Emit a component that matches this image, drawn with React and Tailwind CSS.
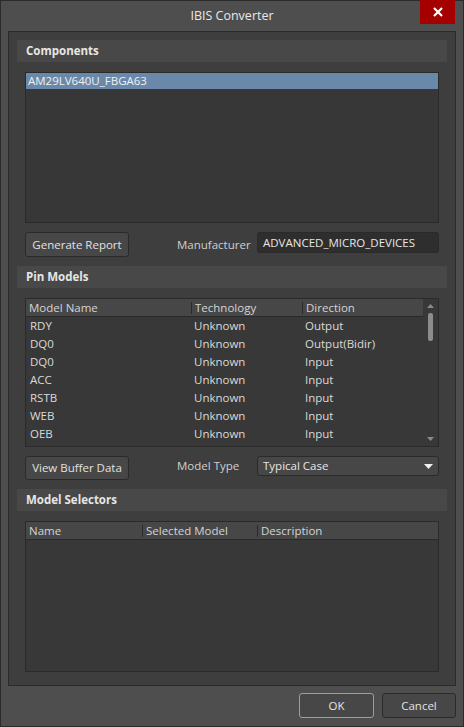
import React from "react";

const pins = [
  ["RDY", "Unknown", "Output"],
  ["DQ0", "Unknown", "Output(Bidir)"],
  ["DQ0", "Unknown", "Input"],
  ["ACC", "Unknown", "Input"],
  ["RSTB", "Unknown", "Input"],
  ["WEB", "Unknown", "Input"],
  ["OEB", "Unknown", "Input"],
];

function SectionHeader({ title }) {
  return (
    <div className="h-[22px] bg-[#484848] flex items-center px-[9px] text-[11.5px] font-bold text-[#e6e6e6]">
      {title}
    </div>
  );
}

function Button({ children, className = "" }) {
  return (
    <button className={"border border-[#2a2a2a] rounded-[3px] bg-[#474747] text-[11.5px] text-[#e2e2e2] " + className}>
      {children}
    </button>
  );
}

export default function App() {
  return (
    <div
      className="w-[464px] h-[727px] bg-[#4e4e4e] border border-[#2b2b2b] flex flex-col text-[#dcdcdc]"
      style={{ fontFamily: "'Open Sans', 'Noto Sans', sans-serif" }}
    >
      {/* title bar */}
      <div className="relative h-[30px] flex items-center justify-center text-[12.5px] text-[#e8e8e8]">
        IBIS Converter
        <div className="absolute right-[8px] top-[-1px] w-[35px] h-[24px] bg-[#a50000] flex items-center justify-center">
          <svg width="10" height="10" viewBox="0 0 10 10">
            <path d="M1 1 L9 9 M9 1 L1 9" stroke="#fff" strokeWidth="2.2" />
          </svg>
        </div>
      </div>

      {/* main panel */}
      <div className="mx-[7px] h-[655px] border border-[#2a2a2a] bg-[#3e3e3e] px-[8px] pt-[8px] flex flex-col">
        <SectionHeader title="Components" />
        <div className="px-[8px] flex flex-col">
          <div className="mt-[10px] h-[151px] border border-[#2a2a2a] bg-[#373737]">
            <div className="h-[16px] bg-[#6a89aa] flex items-center px-[2px] text-[11.5px] text-[#f0f0f0]">
              AM29LV640U_FBGA63
            </div>
          </div>
          <div className="mt-[9px] flex items-center h-[25px]">
            <Button className="w-[104px] h-[25px]">Generate Report</Button>
            <span className="ml-[48px] w-[80px] text-[11.5px] text-[#cfcfcf]">Manufacturer</span>
            <div className="flex-1 h-[21px] -mt-[4px] border border-[#2a2a2a] rounded-[3px] bg-[#2e2e2e] flex items-center px-[5px] text-[11.5px] text-[#e6e6e6]">
              ADVANCED_MICRO_DEVICES
            </div>
          </div>
        </div>

        <div className="mt-[9px]">
          <SectionHeader title="Pin Models" />
        </div>
        <div className="px-[8px] flex flex-col">
          <div className="mt-[10px] h-[149px] border border-[#2a2a2a] bg-[#383838] flex">
            <div className="flex-1 flex flex-col">
              <div className="h-[18px] bg-[#474747] border-b border-[#2a2a2a] flex items-center text-[11.5px] text-[#d4d4d4]">
                <span className="w-[165px] pl-[3px]">Model Name</span>
                <span className="w-[111px] pl-[3px] border-l border-[#2a2a2a] h-[12px] flex items-center">Technology</span>
                <span className="flex-1 pl-[3px] border-l border-[#2a2a2a] h-[12px] flex items-center">Direction</span>
              </div>
              {pins.map((p, i) => (
                <div key={i} className="h-[18px] flex items-center text-[11.5px] text-[#dadada]">
                  <span className="w-[165px] pl-[4px]">{p[0]}</span>
                  <span className="w-[111px] pl-[3px]">{p[1]}</span>
                  <span className="flex-1 pl-[3px]">{p[2]}</span>
                </div>
              ))}
            </div>
            <div className="w-[15px] flex flex-col items-center pt-[5px]">
              <svg width="7" height="4" viewBox="0 0 7 4">
                <path d="M0 4 L3.5 0 L7 4 Z" fill="#8a8a8a" />
              </svg>
              <div className="mt-[5px] w-[5px] h-[28px] rounded-[2px] bg-[#8c8c8c]" />
              <div className="flex-1" />
              <svg width="7" height="4" viewBox="0 0 7 4" className="mb-[5px]">
                <path d="M0 0 L7 0 L3.5 4 Z" fill="#8a8a8a" />
              </svg>
            </div>
          </div>
          <div className="mt-[9px] flex items-start h-[24px]">
            <Button className="w-[104px] h-[24px]">View Buffer Data</Button>
            <span className="ml-[48px] w-[80px] text-[11.5px] text-[#cfcfcf] mt-[1px]">Model Type</span>
            <div className="flex-1 h-[20px] border border-[#2a2a2a] rounded-[3px] bg-[#474747] flex items-center px-[5px] text-[11.5px] text-[#e6e6e6]">
              <span className="flex-1">Typical Case</span>
              <svg width="9" height="5" viewBox="0 0 9 5">
                <path d="M0 0 L9 0 L4.5 5 Z" fill="#f0f0f0" />
              </svg>
            </div>
          </div>
        </div>

        <div className="mt-[9px]">
          <SectionHeader title="Model Selectors" />
        </div>
        <div className="px-[8px] flex flex-col">
          <div className="mt-[10px] h-[151px] border border-[#2a2a2a] bg-[#383838] flex flex-col">
            <div className="h-[18px] bg-[#474747] border-b border-[#2a2a2a] flex items-center text-[11.5px] text-[#d4d4d4]">
              <span className="w-[116px] pl-[3px]">Name</span>
              <span className="w-[115px] pl-[3px] border-l border-[#2a2a2a] h-[12px] flex items-center">Selected Model</span>
              <span className="flex-1 pl-[3px] border-l border-[#2a2a2a] h-[12px] flex items-center">Description</span>
            </div>
          </div>
        </div>
      </div>

      {/* footer */}
      <div className="mt-[7px] flex justify-end gap-[8px] pr-[7px]">
        <button className="w-[75px] h-[25px] border border-[#8aa3bd] rounded-[3px] bg-[#474747] text-[11.5px] text-[#e6e6e6]">
          OK
        </button>
        <Button className="w-[74px] h-[25px]">Cancel</Button>
      </div>
    </div>
  );
}
